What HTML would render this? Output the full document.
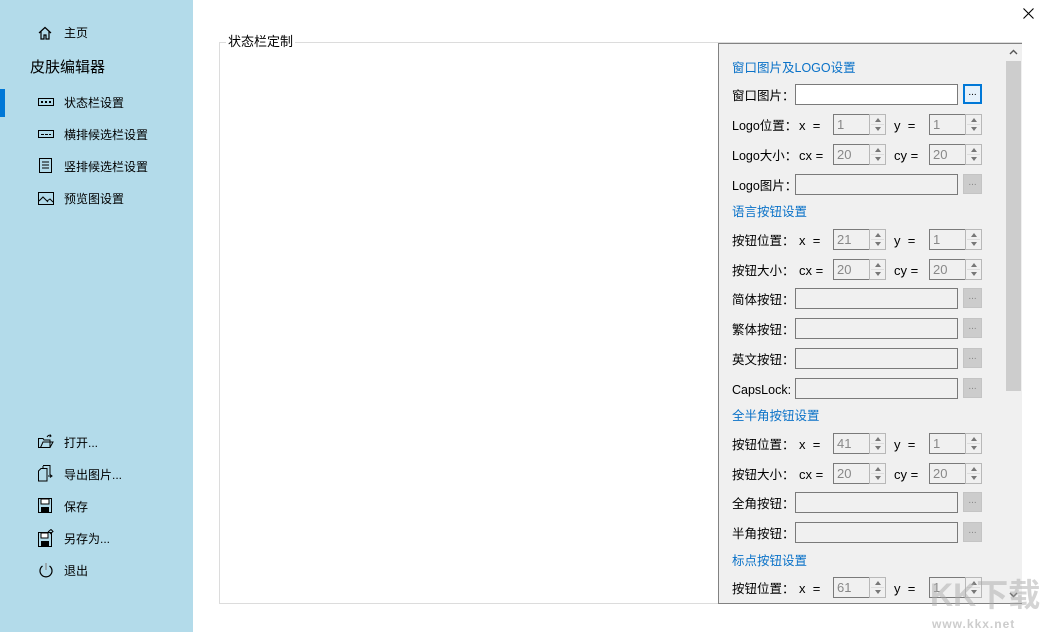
<!DOCTYPE html>
<html><head><meta charset="utf-8"><style>
*{margin:0;padding:0;box-sizing:border-box}
body{width:1044px;height:632px;position:relative;background:#fff;font-family:"Liberation Sans","Noto Sans CJK SC","Microsoft YaHei",sans-serif;font-size:12px;color:#000;overflow:hidden}
.a{position:absolute;white-space:nowrap}
#side{position:absolute;left:0;top:0;width:193px;height:632px;background:#b3dbea}
.nav{position:absolute;left:64px;font-size:12px;line-height:16px}
.ic{position:absolute;left:38px}
.gb{position:absolute;left:219px;top:42px;width:803px;height:562px;border:1px solid #dcdcdc}
.panel{position:absolute;left:718px;top:43px;width:304px;height:561px;background:#f0f0f0;border:1px solid #828282}
.lbl{position:absolute;left:13px;font-size:12.5px;line-height:16px}
.hdr{position:absolute;left:13px;color:#0a72c8;font-size:12.5px;line-height:16px}
.tf{position:absolute;left:76px;width:163px;height:21px;border:1px solid #7a7a7a;background:#f0f0f0}
.bt{position:absolute;left:244px;width:19px;height:20px;background:#ccc;border:1px solid #c4c4c4;color:#888;font-size:10px;text-align:center;line-height:16px}
.sp{position:absolute;width:53px;height:21px}
.sp .in{position:absolute;left:0;top:0;width:37px;height:21px;border:1px solid #7a7a7a;color:#888;padding-left:3px;line-height:19px;font-size:13px}
.sp .ar{position:absolute;left:36px;top:0;width:17px;height:21px;border:1px solid #b8b8b8;background:#f0f0f0}
.sp .ar:before{content:"";position:absolute;left:5px;top:3px;border-left:3px solid transparent;border-right:3px solid transparent;border-bottom:4px solid #777}
.sp .ar:after{content:"";position:absolute;left:5px;top:12px;border-left:3px solid transparent;border-right:3px solid transparent;border-top:4px solid #777}
.sp .ar i{position:absolute;left:1px;right:1px;top:9px;border-top:1px solid #ddd}
.eq{position:absolute;font-size:13px;line-height:16px}
</style></head><body>
<div id="side">
<div style="position:absolute;left:0;top:89px;width:5px;height:28px;background:#0078d7"></div>
<svg class="ic" style="top:26px" width="14" height="14" viewBox="0 0 14 14" fill="none" stroke="#000" stroke-width="1.2"><path d="M1 7L7 1.5 13 7M3 5.5V13H6V9H8V13H11V5.5"/></svg>
<div class="nav" style="top:25px">主页</div>
<div class="a" style="left:30px;top:58px;font-size:15px;line-height:20px">皮肤编辑器</div>
<svg class="ic" style="top:97px" width="16" height="10" viewBox="0 0 16 10"><rect x="0.5" y="1.5" width="15" height="7" fill="none" stroke="#000"/><rect x="3" y="4" width="2" height="2"/><rect x="7" y="4" width="2" height="2"/><rect x="11" y="4" width="2" height="2"/></svg>
<div class="nav" style="top:95px">状态栏设置</div>
<svg class="ic" style="top:129px" width="16" height="10" viewBox="0 0 16 10"><rect x="0.5" y="1.5" width="15" height="7" fill="none" stroke="#000"/><rect x="3" y="5" width="3" height="1"/><rect x="7" y="5" width="3" height="1"/><rect x="11" y="5" width="2" height="1"/></svg>
<div class="nav" style="top:127px">横排候选栏设置</div>
<svg class="ic" style="top:158px;left:39px" width="14" height="16" viewBox="0 0 14 16" fill="none" stroke="#000"><rect x="0.5" y="0.5" width="12" height="14"/><path d="M3 4H10M3 7H10M3 10H10"/></svg>
<div class="nav" style="top:159px">竖排候选栏设置</div>
<svg class="ic" style="top:192px" width="16" height="13" viewBox="0 0 16 13" fill="none" stroke="#000"><rect x="0.5" y="0.5" width="15" height="12"/><path d="M1 9L5 5 10 10M9 9L12 7 15 10"/></svg>
<div class="nav" style="top:191px">预览图设置</div>
<svg class="ic" style="top:434px" width="16" height="15" viewBox="0 0 16 15" fill="none" stroke="#000"><path d="M0.5 4.5H5L6 6H12V13.5H0.5Z M2.5 13.5L5 8H15L12 13.5"/><path d="M9 3Q11 0 13 2M12 0.5L13 2 11.5 3"/></svg>
<div class="nav" style="top:435px">打开...</div>
<svg class="ic" style="top:465px" width="16" height="17" viewBox="0 0 16 17" fill="none" stroke="#000"><path d="M3 3.5H9V16H0.5V6Z M5 1V3.5 M5 0.5H12V10 M10 11L13 11M12 9.5L14 11 12 12.5"/></svg>
<div class="nav" style="top:467px">导出图片...</div>
<svg class="ic" style="top:498px" width="15" height="16" viewBox="0 0 15 16"><rect x="0.5" y="0.5" width="13" height="14" fill="none" stroke="#000"/><rect x="3" y="1" width="8" height="5" fill="#fff" stroke="#000"/><rect x="3" y="9" width="8" height="6" fill="#000"/></svg>
<div class="nav" style="top:499px">保存</div>
<svg class="ic" style="top:529px" width="16" height="18" viewBox="0 0 16 18"><rect x="0.5" y="3.5" width="13" height="14" fill="none" stroke="#000"/><rect x="3" y="4" width="7" height="5" fill="#fff" stroke="#000"/><rect x="3" y="12" width="8" height="6" fill="#000"/><path d="M10 3L13 0.5 15 2.5 12 5" fill="none" stroke="#000"/></svg>
<div class="nav" style="top:531px">另存为...</div>
<svg class="ic" style="top:562px" width="16" height="17" viewBox="0 0 16 17" fill="none" stroke="#000" stroke-width="1.2"><path d="M4.5 4A6 6 0 1 0 11.5 4"/><path d="M8 1V8" stroke="#888"/></svg>
<div class="nav" style="top:563px">退出</div>
</div>
<svg class="a" style="left:1023px;top:8px" width="11" height="11" viewBox="0 0 11 11" stroke="#000" stroke-width="1.1"><path d="M0.5 0.5L10.5 10.5M10.5 0.5L0.5 10.5"/></svg>
<div class="gb"></div>
<div class="a" style="left:226px;top:34px;background:#fff;padding:0 2px;font-size:13px;line-height:16px">状态栏定制</div>
<div class="panel">
<div class="hdr" style="top:16px">窗口图片及LOGO设置</div>
<div class="lbl" style="top:44px">窗口图片：</div>
<div class="tf" style="top:40px;background:#fff"></div>
<div class="bt" style="top:40px;background:#e5f1fb;border:2px solid #0078d7;color:#000;line-height:14px">...</div>
<div class="lbl" style="top:74px">Logo位置：</div>
<div class="eq" style="left:80px;top:74px">x&nbsp;&nbsp;=</div>
<div class="sp" style="left:114px;top:70px"><div class="in">1</div><div class="ar"><i></i></div></div>
<div class="eq" style="left:175px;top:74px">y&nbsp;&nbsp;=</div>
<div class="sp" style="left:210px;top:70px"><div class="in">1</div><div class="ar"><i></i></div></div>
<div class="lbl" style="top:104px">Logo大小：</div>
<div class="eq" style="left:80px;top:104px">cx =</div>
<div class="sp" style="left:114px;top:100px"><div class="in">20</div><div class="ar"><i></i></div></div>
<div class="eq" style="left:175px;top:104px">cy =</div>
<div class="sp" style="left:210px;top:100px"><div class="in">20</div><div class="ar"><i></i></div></div>
<div class="lbl" style="top:134px">Logo图片：</div>
<div class="tf" style="top:130px"></div><div class="bt" style="top:130px">...</div>

<div class="hdr" style="top:160px">语言按钮设置</div>
<div class="lbl" style="top:189px">按钮位置：</div>
<div class="eq" style="left:80px;top:189px">x&nbsp;&nbsp;=</div>
<div class="sp" style="left:114px;top:185px"><div class="in">21</div><div class="ar"><i></i></div></div>
<div class="eq" style="left:175px;top:189px">y&nbsp;&nbsp;=</div>
<div class="sp" style="left:210px;top:185px"><div class="in">1</div><div class="ar"><i></i></div></div>
<div class="lbl" style="top:219px">按钮大小：</div>
<div class="eq" style="left:80px;top:219px">cx =</div>
<div class="sp" style="left:114px;top:215px"><div class="in">20</div><div class="ar"><i></i></div></div>
<div class="eq" style="left:175px;top:219px">cy =</div>
<div class="sp" style="left:210px;top:215px"><div class="in">20</div><div class="ar"><i></i></div></div>
<div class="lbl" style="top:248px">简体按钮：</div><div class="tf" style="top:244px"></div><div class="bt" style="top:244px">...</div>
<div class="lbl" style="top:278px">繁体按钮：</div><div class="tf" style="top:274px"></div><div class="bt" style="top:274px">...</div>
<div class="lbl" style="top:308px">英文按钮：</div><div class="tf" style="top:304px"></div><div class="bt" style="top:304px">...</div>
<div class="lbl" style="top:338px">CapsLock:</div><div class="tf" style="top:334px"></div><div class="bt" style="top:334px">...</div>

<div class="hdr" style="top:364px">全半角按钮设置</div>
<div class="lbl" style="top:393px">按钮位置：</div>
<div class="eq" style="left:80px;top:393px">x&nbsp;&nbsp;=</div>
<div class="sp" style="left:114px;top:389px"><div class="in">41</div><div class="ar"><i></i></div></div>
<div class="eq" style="left:175px;top:393px">y&nbsp;&nbsp;=</div>
<div class="sp" style="left:210px;top:389px"><div class="in">1</div><div class="ar"><i></i></div></div>
<div class="lbl" style="top:423px">按钮大小：</div>
<div class="eq" style="left:80px;top:423px">cx =</div>
<div class="sp" style="left:114px;top:419px"><div class="in">20</div><div class="ar"><i></i></div></div>
<div class="eq" style="left:175px;top:423px">cy =</div>
<div class="sp" style="left:210px;top:419px"><div class="in">20</div><div class="ar"><i></i></div></div>
<div class="lbl" style="top:452px">全角按钮：</div><div class="tf" style="top:448px"></div><div class="bt" style="top:448px">...</div>
<div class="lbl" style="top:482px">半角按钮：</div><div class="tf" style="top:478px"></div><div class="bt" style="top:478px">...</div>

<div class="hdr" style="top:509px">标点按钮设置</div>
<div class="lbl" style="top:537px">按钮位置：</div>
<div class="eq" style="left:80px;top:537px">x&nbsp;&nbsp;=</div>
<div class="sp" style="left:114px;top:533px"><div class="in">61</div><div class="ar"><i></i></div></div>
<div class="eq" style="left:175px;top:537px">y&nbsp;&nbsp;=</div>
<div class="sp" style="left:210px;top:533px"><div class="in">1</div><div class="ar"><i></i></div></div>

<div style="position:absolute;left:286px;top:0;width:17px;height:559px;background:#f0f0f0"></div>
<div style="position:absolute;left:287px;top:17px;width:15px;height:330px;background:#cdcdcd"></div>
<svg style="position:absolute;left:290px;top:5px" width="9" height="6" viewBox="0 0 9 6" fill="none" stroke="#555" stroke-width="1.4"><path d="M1 5L4.5 1.5 8 5"/></svg>
<svg style="position:absolute;left:290px;top:548px" width="9" height="6" viewBox="0 0 9 6" fill="none" stroke="#555" stroke-width="1.4"><path d="M1 1L4.5 4.5 8 1"/></svg>
</div>
<div class="a" style="left:930px;top:578px;font-size:32px;font-weight:bold;color:rgba(170,170,170,0.5);line-height:34px">KK下载</div>
<div class="a" style="left:932px;top:617px;font-size:12px;font-weight:bold;color:rgba(170,170,170,0.6);letter-spacing:1px">www.kkx.net</div>
</body></html>
